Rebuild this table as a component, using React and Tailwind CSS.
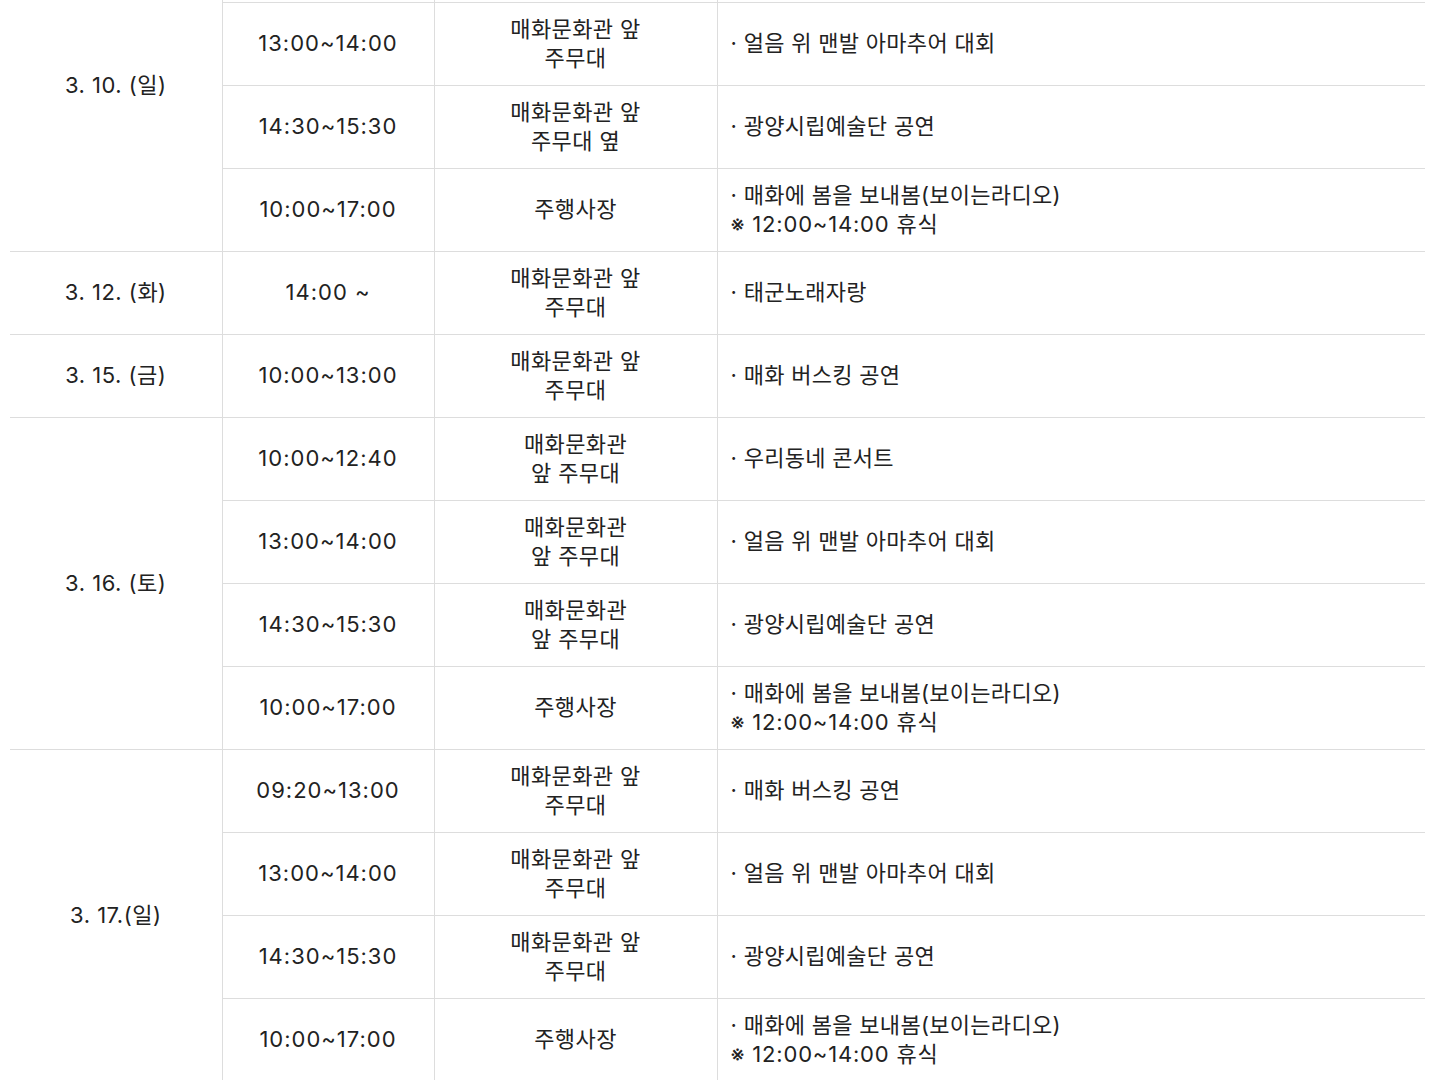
import React from "react";

const rows = [
  { date: "3. 10. (일)", span: 4, time: "", place: [], desc: [] },
  { time: "13:00~14:00", place: ["매화문화관 앞", "주무대"], desc: ["· 얼음 위 맨발 아마추어 대회"] },
  { time: "14:30~15:30", place: ["매화문화관 앞", "주무대 옆"], desc: ["· 광양시립예술단 공연"] },
  { time: "10:00~17:00", place: ["주행사장"], desc: ["· 매화에 봄을 보내봄(보이는라디오)"], note: "※ 12:00~14:00 휴식" },
  { date: "3. 12. (화)", span: 1, time: "14:00 ~", place: ["매화문화관 앞", "주무대"], desc: ["· 태군노래자랑"] },
  { date: "3. 15. (금)", span: 1, time: "10:00~13:00", place: ["매화문화관 앞", "주무대"], desc: ["· 매화 버스킹 공연"] },
  { date: "3. 16. (토)", span: 4, time: "10:00~12:40", place: ["매화문화관", "앞 주무대"], desc: ["· 우리동네 콘서트"] },
  { time: "13:00~14:00", place: ["매화문화관", "앞 주무대"], desc: ["· 얼음 위 맨발 아마추어 대회"] },
  { time: "14:30~15:30", place: ["매화문화관", "앞 주무대"], desc: ["· 광양시립예술단 공연"] },
  { time: "10:00~17:00", place: ["주행사장"], desc: ["· 매화에 봄을 보내봄(보이는라디오)"], note: "※ 12:00~14:00 휴식" },
  { date: "3. 17.(일)", span: 4, time: "09:20~13:00", place: ["매화문화관 앞", "주무대"], desc: ["· 매화 버스킹 공연"] },
  { time: "13:00~14:00", place: ["매화문화관 앞", "주무대"], desc: ["· 얼음 위 맨발 아마추어 대회"] },
  { time: "14:30~15:30", place: ["매화문화관 앞", "주무대"], desc: ["· 광양시립예술단 공연"] },
  { time: "10:00~17:00", place: ["주행사장"], desc: ["· 매화에 봄을 보내봄(보이는라디오)"], note: "※ 12:00~14:00 휴식" },
];

const cell = "border-b border-[#dddddd] align-middle pt-[1px]";

export default function App() {
  return (
    <div
      className="min-h-screen bg-white overflow-hidden text-[#222222] text-[22px] leading-[29.5px]"
      style={{ fontFamily: "Inter, 'Noto Sans CJK KR', sans-serif" }}
    >
      {/* table continues from above: first row is scrolled out of view */}
      <table className="ml-[10px] -mt-[81px] w-[1415px] border-collapse table-fixed">
        <colgroup>
          <col className="w-[212px]" />
          <col className="w-[212px]" />
          <col className="w-[283px]" />
          <col />
        </colgroup>
        <tbody>
          {rows.map((r, i) => (
            <tr key={i} className="h-[83px]">
              {r.date && (
                <td rowSpan={r.span} className={`${cell} border-r text-center tracking-[0.5px]`}>
                  {r.date}
                </td>
              )}
              <td className={`${cell} border-r text-center tracking-[1px]`}>{r.time}</td>
              <td className={`${cell} border-r text-center tracking-[0.4px]`}>
                {r.place.map((p, j) => (
                  <div key={j}>{p}</div>
                ))}
              </td>
              <td className={`${cell} pl-[13px] text-left tracking-[0.3px]`}>
                {r.desc.map((d, j) => (
                  <div key={j}>{d}</div>
                ))}
                {r.note && <div className="tracking-[0.8px]">{r.note}</div>}
              </td>
            </tr>
          ))}
        </tbody>
      </table>
    </div>
  );
}
